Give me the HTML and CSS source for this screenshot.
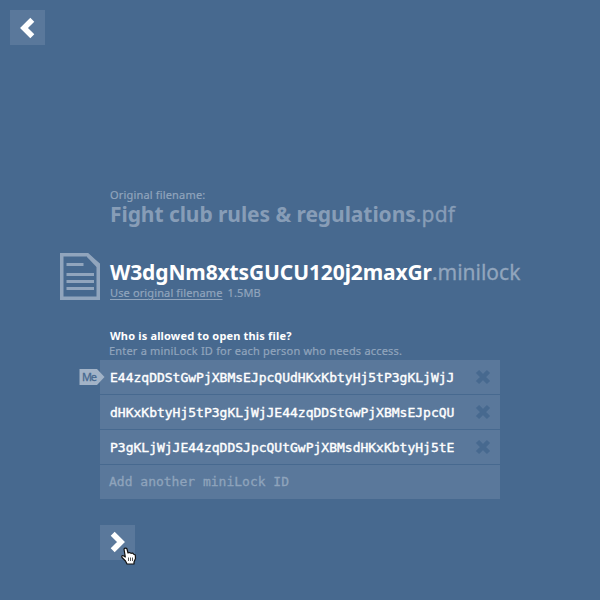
FILE: index.html
```html
<!DOCTYPE html>
<html lang="en">
<head>
<meta charset="utf-8">
<title>miniLock</title>
<link rel="stylesheet" href="styles.css">
</head>
<body>
<header class="top">
  <button class="nav" aria-label="Back"><svg width="35" height="35" viewBox="0 0 35 35"><path d="M22.300 9.700 14 18l8.300 8.300" fill="none" stroke="#fff" stroke-width="5.600"/></svg></button>
</header>
<main class="content">
  <section class="original">
    <div class="label">Original filename:</div>
    <div class="name"><b>Fight club rules &amp; regulations</b><span>.pdf</span></div>
  </section>
  <section class="file">
    <svg class="doc" width="40" height="47" viewBox="0 0 40 47"><path d="M1.75 1.75H27.5L38.25 11.5V45.25H1.75Z" fill="none" stroke="#91a5bd" stroke-width="3.5"/><path d="M27 0 40 11V14H36.500L27 4Z" fill="#91a5bd"/><path d="M6.500 11.500H23.500M6.500 21.500H34M6.500 28.500H34M6.500 35.500H34" stroke="#91a5bd" stroke-width="3"/></svg>
    <div class="info">
      <div class="name"><b>W3dgNm8xtsGUCU120j2maxGr</b><span>.minilock</span></div>
      <div class="meta"><a>Use original filename</a><span>1.5MB</span></div>
    </div>
  </section>
  <section class="access">
    <h2>Who is allowed to open this file?</h2>
    <p>Enter a miniLock ID for each person who needs access.</p>
    <ul class="ids">
      <li><svg class="me" width="26" height="16" viewBox="0 0 26 16"><path d="M.5 0H18L25.500 8 18 16H.5Z" fill="#a2b3c7"/><text x="3" y="12" textLength="15">Me</text></svg><code>E44zqDDStGwPjXBMsEJpcQUdHKxKbtyHj5tP3gKLjWjJ</code><svg class="x" width="16" height="16" viewBox="0 0 16 16"><path d="M2.500 2.500l11 11M13.500 2.500l-11 11"/></svg></li>
      <li><code>dHKxKbtyHj5tP3gKLjWjJE44zqDDStGwPjXBMsEJpcQU</code><svg class="x" width="16" height="16" viewBox="0 0 16 16"><path d="M2.500 2.500l11 11M13.500 2.500l-11 11"/></svg></li>
      <li><code>P3gKLjWjJE44zqDDSJpcQUtGwPjXBMsdHKxKbtyHj5tE</code><svg class="x" width="16" height="16" viewBox="0 0 16 16"><path d="M2.500 2.500l11 11M13.500 2.500l-11 11"/></svg></li>
      <li class="add"><code>Add another miniLock ID</code></li>
    </ul>
  </section>
  <button class="nav next" aria-label="Next"><svg width="35" height="35" viewBox="0 0 35 35"><path d="M12.700 8.700 21 17l-8.300 8.300" fill="none" stroke="#fff" stroke-width="5.600"/></svg></button>
</main>
<svg class="cursor" width="18" height="18" viewBox="0 0 18 18"><path d="M4 2C4.500.8 6.500.8 7 2L8 6 9.500 5.500 11 6.300 12.500 6 13.700 7.200 15.300 8 15.500 11.500 14 15V17H7L5.500 14 2 10.500C1.200 9 2.500 8 4 9L5.300 10Z" fill="#fff" stroke="#111" stroke-width="1.200" stroke-linejoin="round"/><path d="M8.500 10.500V14M10.500 10.500V14M12.500 10.500V14" stroke="#555"/></svg>
</body>
</html>
```
FILE: styles.css
```css
* { box-sizing: border-box; }
body { margin: 0; width: 600px; height: 600px; overflow: hidden; position: relative; background: #47698f; color: #91a5bd; font-family: "Noto Sans", "Open Sans", sans-serif; font-size: 11px; }
.top { height: 188px; padding: 10px; }
.nav { display: block; width: 35px; height: 35px; border: 0; padding: 0; background: #5a789b; }
.nav svg { display: block; }
.content { padding-left: 100px; }
.original { height: 65px; padding-left: 10px; color: #879db7; }
.label { height: 14px; line-height: 14px; color: #91a5bd; letter-spacing: .17px; -webkit-text-stroke: .2px; }
.name { font-size: 21px; height: 24px; line-height: 24px; white-space: nowrap; }
.name b { letter-spacing: -.07px; }
.name span { -webkit-text-stroke: .3px; }
.original .name span { letter-spacing: .2px; }
.file { display: flex; margin-left: -40px; height: 77px; }
.doc { flex: none; }
.info { margin-left: 10px; padding-top: 7px; }
.info .name b { color: #fff; letter-spacing: -.12px; }
.meta { display: flex; gap: 5px; height: 15px; line-height: 15px; margin-top: 1px; letter-spacing: .13px; -webkit-text-stroke: .2px; }
.meta a { text-decoration: underline; text-underline-offset: 2px; }
h2 { margin: -1px 0 0; padding-left: 10px; font-size: 11px; height: 15px; line-height: 14px; color: #fff; letter-spacing: .17px; }
p { margin: 0; padding-left: 9px; height: 16px; line-height: 14px; letter-spacing: .19px; -webkit-text-stroke: .2px; }
.ids { list-style: none; margin: 0; padding: 0; width: 400px; display: grid; gap: 1px; }
li { position: relative; display: flex; align-items: center; justify-content: space-between; height: 34px; padding: 0 9px 0 10px; background: #5a789b; color: #fff; }
code { font: 13px/34px "DejaVu Sans Mono", monospace; padding-top: 2px; -webkit-text-stroke: .4px; }
.add { padding-left: 9px; color: #8fa4bc; }
.add code { padding-top: 0; -webkit-text-stroke: .3px; }
.x path { stroke: #47698f; stroke-width: 4.500; }
.me { position: absolute; left: -21px; top: 9px; }
.me text { font-size: 11px; fill: #47698f; stroke: #47698f; stroke-width: .3px; }
.next { margin-top: 26px; }
.cursor { position: absolute; left: 120px; top: 547px; }
```
